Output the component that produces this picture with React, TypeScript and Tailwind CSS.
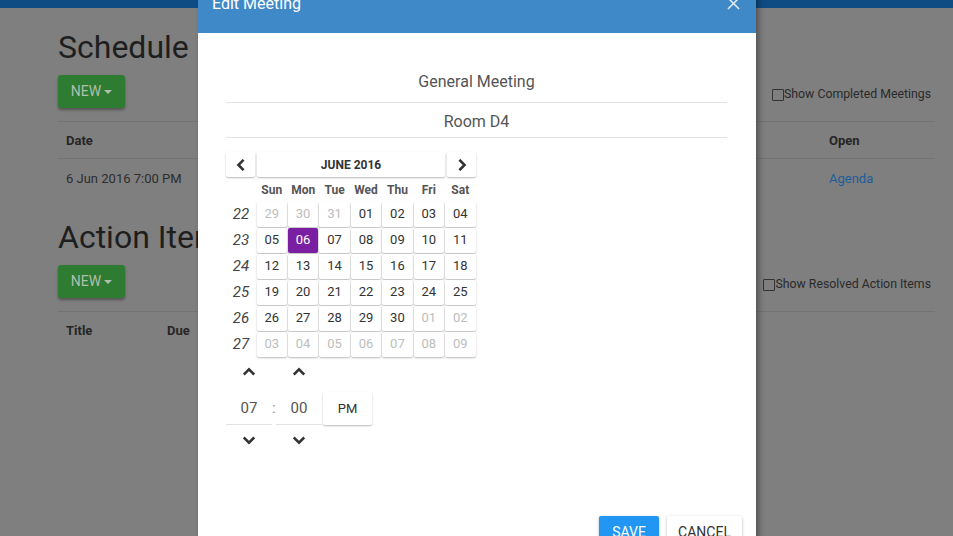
import React from "react";

const weeks = [
  { wk: 22, days: [["29", true], ["30", true], ["31", true], ["01"], ["02"], ["03"], ["04"]] },
  { wk: 23, days: [["05"], ["06"], ["07"], ["08"], ["09"], ["10"], ["11"]] },
  { wk: 24, days: [["12"], ["13"], ["14"], ["15"], ["16"], ["17"], ["18"]] },
  { wk: 25, days: [["19"], ["20"], ["21"], ["22"], ["23"], ["24"], ["25"]] },
  { wk: 26, days: [["26"], ["27"], ["28"], ["29"], ["30"], ["01", true], ["02", true]] },
  { wk: 27, days: [["03", true], ["04", true], ["05", true], ["06", true], ["07", true], ["08", true], ["09", true]] },
] as { wk: number; days: [string, boolean?][] }[];

const dayNames = ["Sun", "Mon", "Tue", "Wed", "Thu", "Fri", "Sat"];

const Chevron = ({ dir }: { dir: "up" | "down" | "left" | "right" }) => {
  const paths: Record<string, string> = {
    up: "M2 9 L7 4 L12 9",
    down: "M2 5 L7 10 L12 5",
    left: "M9 2 L4 7 L9 12",
    right: "M5 2 L10 7 L5 12",
  };
  return (
    <svg width="12" height="12" viewBox="0 0 14 14" fill="none">
      <path d={paths[dir]} stroke="#333" strokeWidth="3" strokeLinecap="square" strokeLinejoin="miter" />
    </svg>
  );
};

const raised = "bg-white shadow-[0_1px_2px_rgba(0,0,0,0.28)] rounded-[2px]";

const NewButton = () => (
  <button className="h-[33px] w-[67px] bg-[#2e7b32] rounded-[3px] shadow-[0_2px_3px_rgba(0,0,0,0.35)] text-[#aebfae] text-[14px] flex items-center justify-center gap-[3px]">
    NEW
    <span className="inline-block w-0 h-0 border-l-[4px] border-r-[4px] border-t-[4px] border-l-transparent border-r-transparent border-t-[#aebfae]" />
  </button>
);

const Checkbox = ({ label }: { label: string }) => (
  <label className="flex items-center text-[12.3px] text-[#2a2a2a]">
    <span className="inline-block w-[12px] h-[12px] border border-[#333] rounded-[1px] mt-[2px]" />
    {label}
  </label>
);

export default function App() {
  return (
    <div className="relative h-[536px] w-[953px] overflow-hidden bg-[#7f7f7f] font-['Roboto',sans-serif]">
      <div className="h-[8px] bg-[#0f4c84]" />
      <div className="ml-[58px] mr-[18px]">
        <h1 className="mt-[19px] text-[32px] leading-[40px] text-[#1e1e1e]">Schedule</h1>
        <div className="mt-[8px] flex items-start justify-between">
          <NewButton />
          <div className="mt-[10px] mr-[4px]">
            <Checkbox label="Show Completed Meetings" />
          </div>
        </div>
        <div className="mt-[13px] border-t border-[#737373]">
          <div className="flex h-[37px] pt-[1px] items-center border-b border-[#737373] text-[13px] font-bold text-[#262626]">
            <div className="pl-[8px] w-[763px]">Date</div>
            <div className="pl-[8px]">Open</div>
          </div>
          <div className="flex h-[38px] pt-[1px] items-center text-[13px] text-[#2d2d2d]">
            <div className="pl-[8px] w-[763px]">6 Jun 2016 7:00 PM</div>
            <div className="pl-[8px] text-[#1d5e98]">Agenda</div>
          </div>
        </div>
        <h1 className="mt-[20px] text-[32px] leading-[40px] text-[#1e1e1e]">Action Items</h1>
        <div className="mt-[8px] flex items-start justify-between">
          <NewButton />
          <div className="mt-[10px] mr-[4px]">
            <Checkbox label="Show Resolved Action Items" />
          </div>
        </div>
        <div className="mt-[13px] border-t border-[#737373]">
          <div className="flex h-[37px] items-center text-[13px] font-bold text-[#262626]">
            <div className="pl-[8px] w-[109px]">Title</div>
            <div>Due</div>
          </div>
        </div>
      </div>

      {/* modal */}
      <div className="absolute left-[198px] top-[-17px] w-[558px] h-[620px] bg-white shadow-[3px_0_6px_rgba(0,0,0,0.35)]">
        <div className="h-[50px] bg-[#3f89c9] flex items-start justify-between px-[14px] text-white">
          <span className="mt-[9px] text-[16px] leading-[24px]">Edit Meeting</span>
          <svg width="13" height="13" viewBox="0 0 14 14" className="mt-[14px] mr-[2px]">
            <path d="M1 1 L13 13 M13 1 L1 13" stroke="#e8eef6" strokeWidth="1.6" />
          </svg>
        </div>
        <div className="px-[28px] pt-[35px]">
          <div className="mr-[1px]">
            <div className="h-[35px] pb-[6px] border-b border-[#e3e3e3] flex items-center justify-center text-[16px] text-[#555]">
              General Meeting
            </div>
            <div className="h-[35px] pt-[3px] border-b border-[#e3e3e3] flex items-center justify-center text-[16px] text-[#555]">
              Room D4
            </div>
          </div>

          <div className="mt-[14px] w-[250px]">
            <div className="flex h-[25px] gap-[2px]">
              <button className={`${raised} w-[29px] flex items-center justify-center`}>
                <Chevron dir="left" />
              </button>
              <button className={`${raised} flex-1 text-[12px] font-bold text-[#333]`}>JUNE 2016</button>
              <button className={`${raised} w-[29px] flex items-center justify-center`}>
                <Chevron dir="right" />
              </button>
            </div>
            <div className="grid grid-cols-[30px_repeat(7,1fr)]">
              <div />
              {dayNames.map((d) => (
                <div key={d} className="h-[24px] pt-[1px] flex items-center justify-center text-[12px] font-bold text-[#555]">
                  {d}
                </div>
              ))}
              {weeks.map((w) => (
                <React.Fragment key={w.wk}>
                  <div className="h-[26px] flex items-center justify-center italic text-[15px] text-[#444]">{w.wk}</div>
                  {w.days.map(([d, muted], i) => {
                    const sel = w.wk === 23 && d === "06";
                    return (
                      <div key={i} className="h-[26px] p-[0.5px]">
                        <div
                          className={`h-full flex items-center justify-center text-[13px] rounded-[2px] shadow-[0_1px_2px_rgba(0,0,0,0.28)] ${
                            sel ? "bg-[#7b1fa2] text-white" : muted ? "bg-white text-[#bdbdbd]" : "bg-white text-[#333]"
                          }`}
                        >
                          {d}
                        </div>
                      </div>
                    );
                  })}
                </React.Fragment>
              ))}
            </div>

            <div className="mt-[3px] flex">
              <div className="w-[46px] flex flex-col items-center">
                <div className="h-[24px] flex items-center"><Chevron dir="up" /></div>
                <div className="mt-[8px] h-[33px] w-full border-b border-[#e3e3e3] flex items-center justify-center text-[15px] text-[#555]">07</div>
                <div className="h-[30px] flex items-center"><Chevron dir="down" /></div>
              </div>
              <div className="w-[4px] pt-[32px] h-[65px] flex items-center justify-center text-[14px] text-[#888]">:</div>
              <div className="w-[46px] flex flex-col items-center">
                <div className="h-[24px] flex items-center"><Chevron dir="up" /></div>
                <div className="mt-[8px] h-[33px] w-full border-b border-[#e3e3e3] flex items-center justify-center text-[15px] text-[#555]">00</div>
                <div className="h-[30px] flex items-center"><Chevron dir="down" /></div>
              </div>
              <div className="ml-[1px] pt-[32px]">
                <button className={`${raised} w-[49px] h-[33px] text-[13px] text-[#333]`}>PM</button>
              </div>
            </div>
          </div>

          <div className="mt-[61px] flex justify-end gap-[8px] mr-[-14px]">
            <button className="h-[32px] w-[60px] bg-[#2196f3] text-white text-[14px] rounded-[2px] shadow-[0_1px_3px_rgba(0,0,0,0.3)]">SAVE</button>
            <button className="h-[32px] w-[75px] bg-white text-[#333] text-[14px] rounded-[2px] shadow-[0_1px_3px_rgba(0,0,0,0.3)]">CANCEL</button>
          </div>
        </div>
      </div>
    </div>
  );
}
